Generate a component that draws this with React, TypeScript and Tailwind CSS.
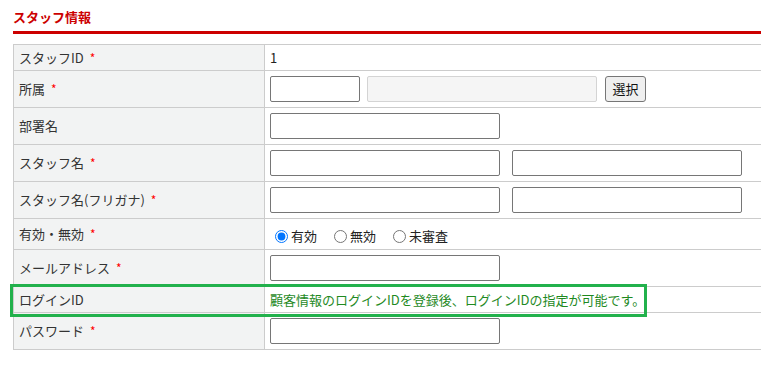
const font = { fontFamily: '"Noto Sans CJK JP", "Noto Sans", sans-serif' };

function Req() {
  return <span className="ml-[6px] text-[12px] text-[#ff0000]">*</span>;
}

function Field({ w = "w-[230px]", className = "" }: { w?: string; className?: string }) {
  return (
    <input
      type="text"
      className={`${w} h-[26px] rounded-[2px] border border-[#767676] bg-white px-1 text-[13px] ${className}`}
    />
  );
}

type Row = { label: string; req?: boolean; h: string; content: React.ReactNode };

export default function App() {
  const rows: Row[] = [
    { label: "スタッフID", req: true, h: "h-[26px]", content: <span className="text-[13px] text-[#222]">1</span> },
    {
      label: "所属",
      req: true,
      h: "h-[37px]",
      content: (
        <div className="flex items-center">
          <Field w="w-[90px]" />
          <input
            type="text"
            disabled
            className="ml-[7px] h-[26px] w-[230px] rounded-[2px] border border-[#d4d4d4] bg-[#f5f5f5]"
          />
          <button
            type="button"
            className="ml-[8px] h-[26px] w-[41px] rounded-[3px] border border-[#767676] bg-[#efefef] text-[13px] text-[#111]"
          >
            選択
          </button>
        </div>
      ),
    },
    { label: "部署名", h: "h-[37px]", content: <Field /> },
    {
      label: "スタッフ名",
      req: true,
      h: "h-[37px]",
      content: (
        <div className="flex gap-[12px]">
          <Field />
          <Field />
        </div>
      ),
    },
    {
      label: "スタッフ名(フリガナ)",
      req: true,
      h: "h-[37px]",
      content: (
        <div className="flex gap-[12px]">
          <Field />
          <Field />
        </div>
      ),
    },
    {
      label: "有効・無効",
      req: true,
      h: "h-[31px]",
      content: (
        <div className="flex items-center pl-[5px] pt-[4px] text-[13px] text-[#222]">
          <label className="flex items-center">
            <input type="radio" name="st" defaultChecked className="m-0 h-[13px] w-[13px] accent-[#0075ff]" />
            <span className="ml-[3px]">有効</span>
          </label>
          <label className="ml-[17px] flex items-center">
            <input type="radio" name="st" className="m-0 h-[13px] w-[13px]" />
            <span className="ml-[3px]">無効</span>
          </label>
          <label className="ml-[17px] flex items-center">
            <input type="radio" name="st" className="m-0 h-[13px] w-[13px]" />
            <span className="ml-[3px]">未審査</span>
          </label>
        </div>
      ),
    },
    { label: "メールアドレス", req: true, h: "h-[37px]", content: <Field /> },
    {
      label: "ログインID",
      h: "h-[26px]",
      content: (
        <span className="text-[13px] text-[#1f8a1f]">
          顧客情報のログインIDを登録後、ログインIDの指定が可能です。
        </span>
      ),
    },
    { label: "パスワード", req: true, h: "h-[37px]", content: <Field /> },
  ];

  return (
    <div className="relative h-[384px] w-[761px] overflow-hidden bg-white" style={font}>
      <div className="pl-[13px] pt-[8px]">
        <h2 className="h-[23px] text-[13px] font-bold leading-[18px] text-[#cc0000]">スタッフ情報</h2>
        <div className="h-[3px] bg-[#cc0000]" />
        <table className="mt-[10px] w-[760px] border-collapse text-[13px] leading-[18px]">
          <tbody>
            {rows.map((r) => (
              <tr key={r.label} className={r.h}>
                <td className="w-[251px] border border-[#cccccc] bg-[#f2f3f3] px-[5px] align-middle text-[#333]">
                  {r.label}
                  {r.req && <Req />}
                </td>
                <td className="border border-[#cccccc] px-[5px] align-middle">{r.content}</td>
              </tr>
            ))}
          </tbody>
        </table>
      </div>
      {/* annotation box */}
      <div className="absolute left-[10px] top-[284px] h-[33px] w-[637px] border-[3px] border-[#22b14c]" />
    </div>
  );
}
